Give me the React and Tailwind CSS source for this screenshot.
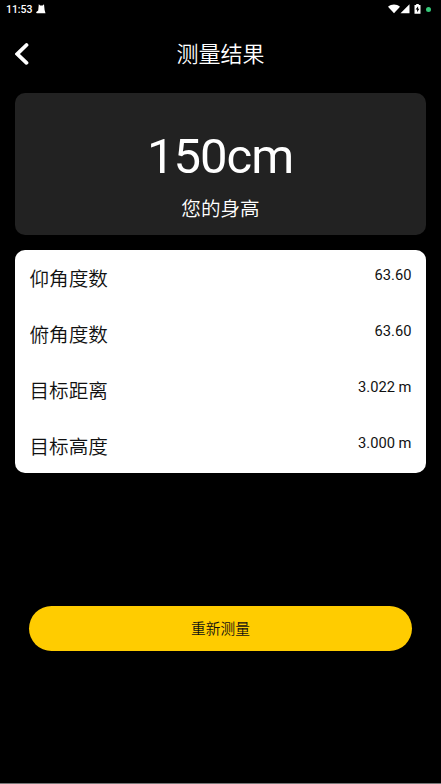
const measurements = [
  { label: "仰角度数", value: "63.60" },
  { label: "俯角度数", value: "63.60" },
  { label: "目标距离", value: "3.022 m" },
  { label: "目标高度", value: "3.000 m" },
];

const StatusBar = () => (
  <div className="flex h-[18px] items-center justify-between pl-[6px] pr-[10px] text-white">
    <div className="flex items-center gap-[4px]">
      <span className="pt-px text-[10.5px] font-medium leading-[17px] tracking-[-0.05px]">11:53</span>
      <svg className="h-[10px] w-[10px]" viewBox="0 0 10 10" fill="currentColor">
        <path d="M2.8 .3 4.2 1.6h2.4L8 .3 8.6 6 9.5 9.3H.8L0 8.2 2.2 6.5Z" />
      </svg>
    </div>
    <div className="flex items-center">
      <svg className="h-[10px] w-[12px]" viewBox="0 0 12 10" fill="currentColor">
        <path d="M0 2.7C3.5-.4 8.5-.4 12 2.7L6 9.3Z" />
      </svg>
      <svg className="h-[10px] w-[10px]" viewBox="0 0 10 10" fill="currentColor">
        <path d="M9.5 .3V9.3H.5Z" />
      </svg>
      <svg className="ml-[4px] h-[10px] w-[7px]" viewBox="0 0 7 10">
        <path fill="currentColor" d="M2.2 0h2.6v1H6.5v8.7H.5V1h1.7Z" />
        <path fill="#000" d="M4.1 2.2 1.6 5.6h1.5v2.6L5.4 4.8H4.1Z" />
      </svg>
      <span className="ml-[5px] size-[5px] rounded-full bg-[#35c878]" />
    </div>
  </div>
);

const Header = () => (
  <header className="grid h-[75px] grid-cols-[1fr_auto_1fr] items-start px-[15px] pt-[20px] text-white">
    <svg
      className="mt-[4px] h-[24px] w-[15px]"
      viewBox="0 0 15 24"
      fill="none"
      stroke="currentColor"
      strokeWidth="3.8"
      strokeLinecap="round"
    >
      <path d="M11.5 3 2.3 12l9.2 8.8" />
    </svg>
    <h1 className="pt-[2px] text-[22px] font-[350] leading-[30px]">测量结果</h1>
  </header>
);

const App = () => {
  return (
    <main className="flex h-[784px] flex-col border-b border-[#777] bg-black font-['Roboto','Noto_Sans_CJK_SC',sans-serif]">
      <StatusBar />
      <Header />

      <section className="mx-[15px] flex h-[142px] flex-col items-center rounded-[10px] bg-[#222] pt-[35px] text-white">
        <p className="pr-px text-[49px] leading-[58px] tracking-[-1px]">150cm</p>
        <p className="mt-[10px] text-[19.6px] font-[350] leading-[28px]">您的身高</p>
      </section>

      <ul className="mx-[15px] mt-[15px] h-[223px] rounded-[10px] bg-white px-[14.5px] text-[#111]">
        {measurements.map((item) => (
          <li key={item.label} className="flex h-[56px] items-start justify-between">
            <span className="pt-[16px] text-[19.6px] font-[350] leading-[28px]">{item.label}</span>
            <span className="pt-[15px] text-[14.7px] leading-[20px]">{item.value}</span>
          </li>
        ))}
      </ul>

      <button className="mx-[29px] mt-[133px] h-[45px] rounded-full bg-[#ffcc00] pt-[2px] text-[14.7px] font-[350] text-[#111]">
        重新测量
      </button>
    </main>
  );
};

export default App;
